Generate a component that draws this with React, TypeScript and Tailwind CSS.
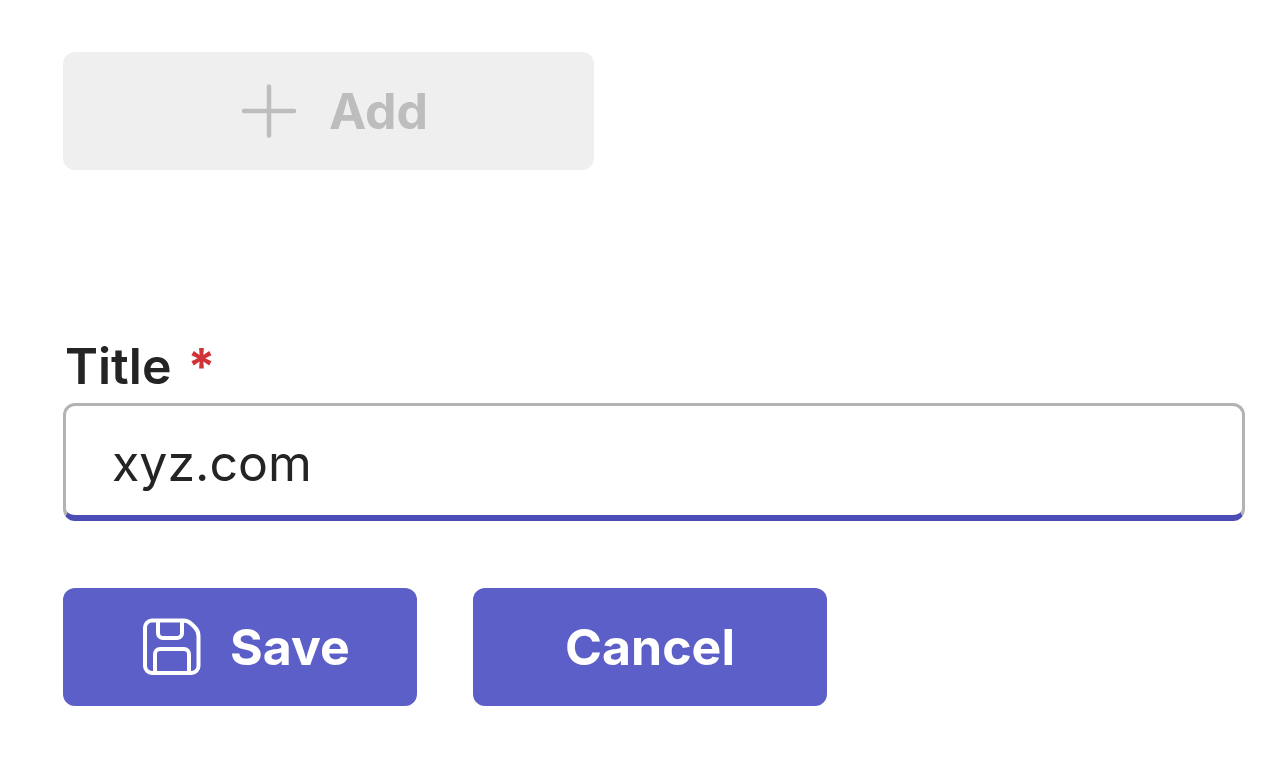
import React, { useState } from "react";

const AddIcon = () => (
  <svg
    className="h-14 w-14"
    viewBox="0 0 56 56"
    fill="none"
    stroke="currentColor"
    strokeWidth="4.500"
    strokeLinecap="round"
    aria-hidden="true"
  >
    <path d="M28 3.500v49M3 28h50" />
  </svg>
);

const SaveIcon = () => (
  <svg
    className="h-15 w-15"
    viewBox="0 0 60 60"
    fill="none"
    stroke="currentColor"
    strokeWidth="4"
    strokeLinejoin="round"
    aria-hidden="true"
  >
    <path d="M10 3.500h31a12 12 0 0 1 8.500 3.500l3.500 3.500a12 12 0 0 1 3.500 8.500V49a7 7 0 0 1-7 7H10a7 7 0 0 1-7-7V10.500a7 7 0 0 1 7-7z" />
    <path d="M16 4v12a5 5 0 0 0 5 5h14a5 5 0 0 0 5-5V4" />
    <path d="M13 56V37a5 5 0 0 1 5-5h24a5 5 0 0 1 5 5v19" />
  </svg>
);

const App = () => {
  const [title, setTitle] = useState("xyz.com");

  return (
    <div className="flex min-h-screen flex-col items-start bg-white pt-[52px] pr-[18px] pb-[62px] pl-[63px] font-['Inter',sans-serif] text-[50px] leading-[48px] text-[#242424]">
      <button
        type="button"
        disabled
        className="flex h-[118px] w-[531px] items-center justify-center gap-8 rounded-xl bg-[#efefef] pl-3 font-bold text-[#bdbdbd]"
      >
        <AddIcon />
        Add
      </button>
      <form
        className="mt-[172px] w-full"
        onSubmit={(e) => e.preventDefault()}
      >
        <label htmlFor="title" className="flex gap-4 pl-0.5 font-semibold">
          Title <span className="font-bold text-[#d13438]">*</span>
        </label>
        <input
          id="title"
          type="text"
          required
          value={title}
          onChange={(e) => setTitle(e.target.value)}
          className="mt-[13px] block h-[118px] w-full rounded-xl border-3 border-b-6 border-[#b3b3b3] border-b-[#4a4db5] px-[46px] pt-1 outline-none"
        />
        <div className="mt-[67px] flex gap-14">
          <button
            type="submit"
            className="flex h-[118px] w-[354px] items-center justify-center gap-7 rounded-xl bg-[#5b5fc7] pl-3 font-bold text-white"
          >
            <SaveIcon />
            Save
          </button>
          <button
            type="button"
            onClick={() => setTitle("")}
            className="h-[118px] w-[354px] rounded-xl bg-[#5b5fc7] font-bold text-white"
          >
            Cancel
          </button>
        </div>
      </form>
    </div>
  );
};

export default App;
